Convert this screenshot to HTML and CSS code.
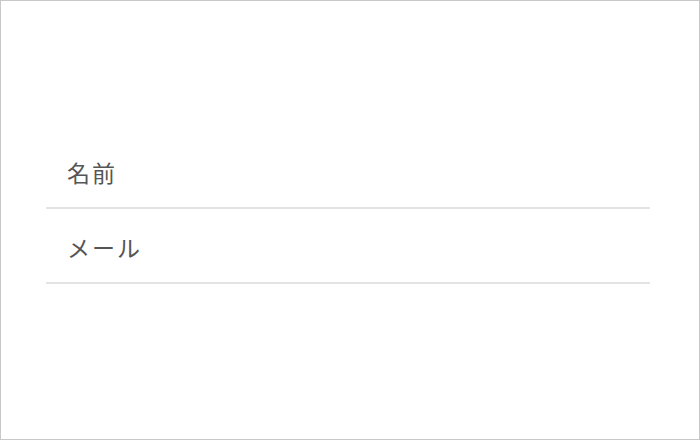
FILE: index.html
```html
<!DOCTYPE html>
<html lang="ja">
<head>
<meta charset="utf-8">
<link rel="stylesheet" href="styles.css">
</head>
<body>
<div class="frame">
  <ul class="list">
    <li class="item">名前</li>
    <li class="item">メール</li>
  </ul>
</div>
</body>
</html>
```
FILE: styles.css
```css
html, body {
  margin: 0;
  padding: 0;
  background: #fff;
}
.frame {
  box-sizing: border-box;
  width: 700px;
  height: 440px;
  border: 1px solid #c8c8c8;
  padding: 133px 49px 0 45px;
}
.list {
  list-style: none;
  margin: 0;
  padding: 0;
}
.item {
  box-sizing: border-box;
  height: 75px;
  display: flex;
  align-items: center;
  padding: 3px 0 0 21px;
  border-bottom: 2px solid #e3e3e3;
  font-family: "Noto Sans CJK JP", sans-serif;
  font-size: 23px;
  letter-spacing: 2px;
  color: #555;
}
```
